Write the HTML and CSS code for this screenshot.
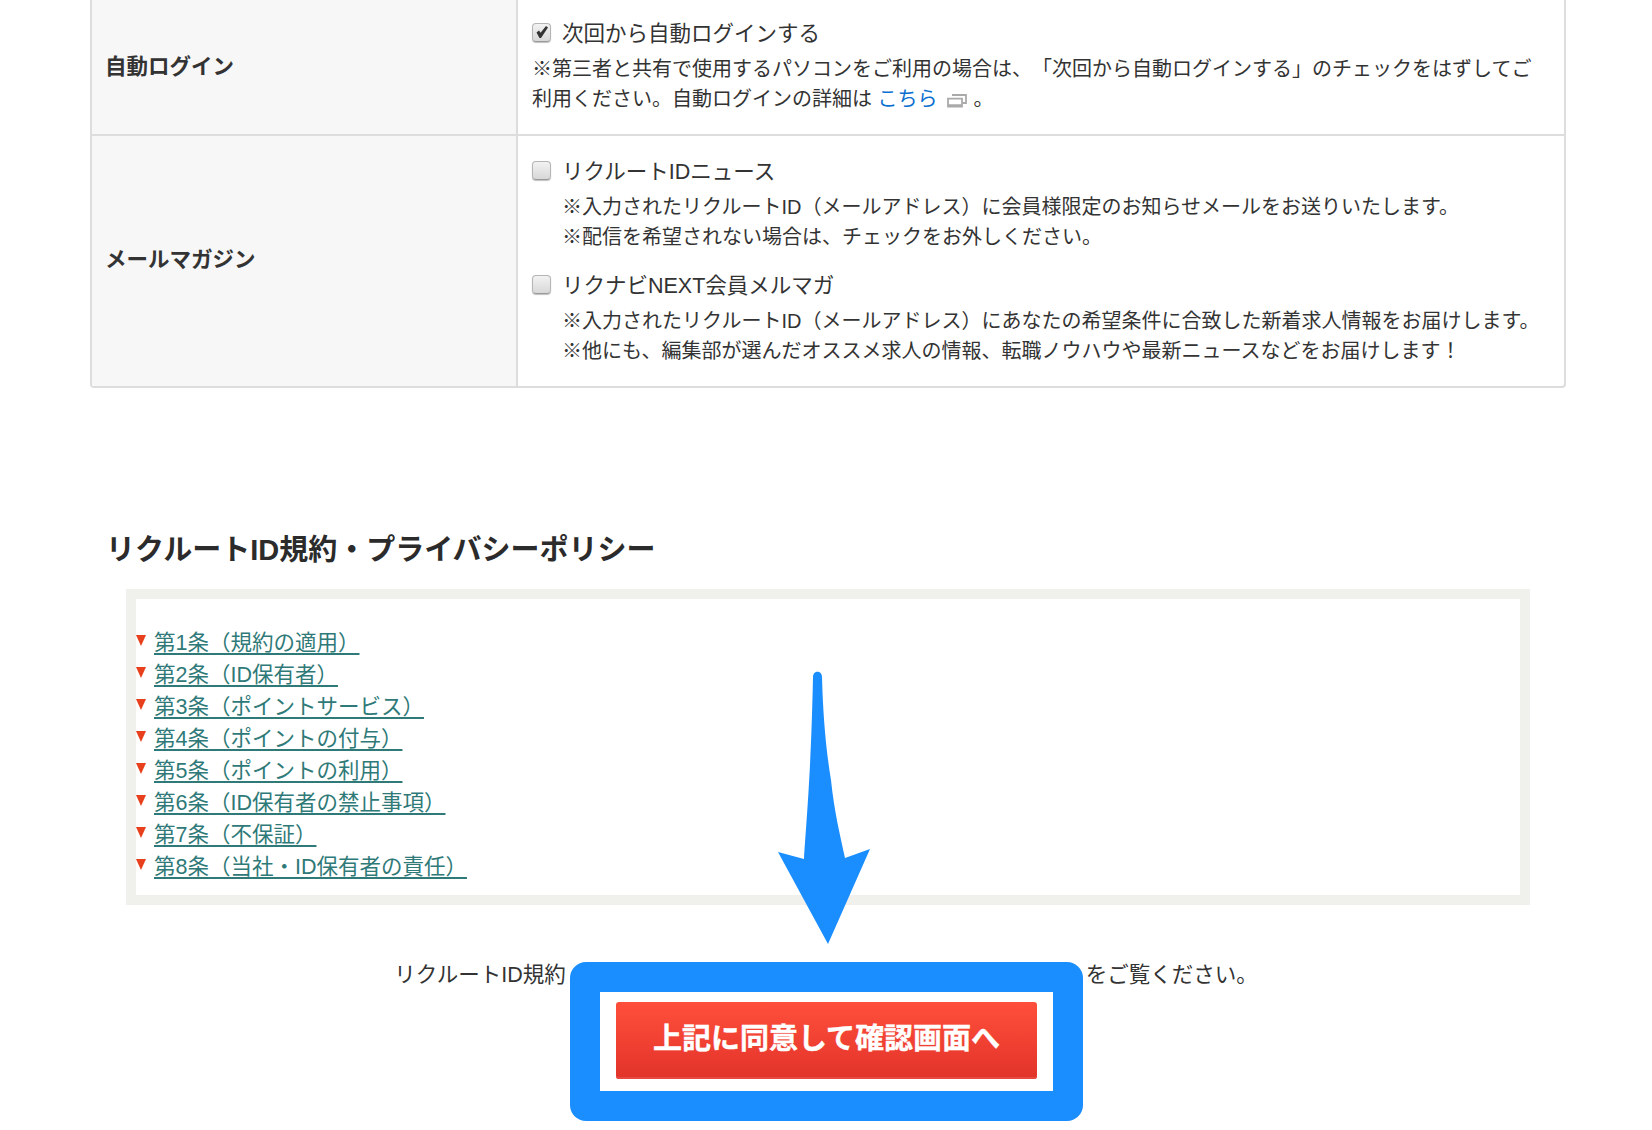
FILE: index.html
```html
<!DOCTYPE html>
<html lang="ja">
<head>
<meta charset="utf-8">
<title>リクルートID</title>
<link rel="stylesheet" href="styles.css">
</head>
<body>
<div class="page">
  <div class="form-table">
    <div class="row row-login">
      <div class="head">自動ログイン</div>
      <div class="cell">
        <div class="option">
          <span class="cb"><svg viewBox="0 0 14 14" width="14" height="14"><path d="M1.500 7.500 L4 5.500 L5.600 7.800 L11 1 L13 2.500 L6 13 L4.500 13 Z" fill="#333"/></svg></span>
          <span>次回から自動ログインする</span>
        </div>
        <p class="note">※第三者と共有で使用するパソコンをご利用の場合は、「次回から自動ログインする」のチェックをはずしてご利用ください。自動ログインの詳細は <a class="info-link" href="#">こちら</a><svg class="win-icon" viewBox="0 0 20 14" width="20" height="14"><path d="M5 1 H19 V9 H16" fill="none" stroke="#aaa" stroke-width="1.800"/><path d="M1 4.700 H15 V12.500 H1 Z" fill="#fff" stroke="#aaa" stroke-width="1.800"/><path d="M1 11.500 H15" stroke="#aaa" stroke-width="2.500"/></svg>。</p>
      </div>
    </div>
    <div class="row row-mail">
      <div class="head">メールマガジン</div>
      <div class="cell">
        <div class="option">
          <span class="cb"></span>
          <span>リクルートIDニュース</span>
        </div>
        <p class="note indent">※入力されたリクルートID（メールアドレス）に会員様限定のお知らせメールをお送りいたします。<br>※配信を希望されない場合は、チェックをお外しください。</p>
        <div class="option option-next">
          <span class="cb"></span>
          <span>リクナビNEXT会員メルマガ</span>
        </div>
        <p class="note indent">※入力されたリクルートID（メールアドレス）にあなたの希望条件に合致した新着求人情報をお届けします。<br>※他にも、編集部が選んだオススメ求人の情報、転職ノウハウや最新ニュースなどをお届けします！</p>
      </div>
    </div>
  </div>

  <h2 class="title">リクルートID規約・プライバシーポリシー</h2>

  <ul class="toc">
    <li><a href="#">第1条（規約の適用）</a></li>
    <li><a href="#">第2条（ID保有者）</a></li>
    <li><a href="#">第3条（ポイントサービス）</a></li>
    <li><a href="#">第4条（ポイントの付与）</a></li>
    <li><a href="#">第5条（ポイントの利用）</a></li>
    <li><a href="#">第6条（ID保有者の禁止事項）</a></li>
    <li><a href="#">第7条（不保証）</a></li>
    <li><a href="#">第8条（当社・ID保有者の責任）</a></li>
  </ul>

  <p class="read-on"><span>リクルートID規約</span><span>をご覧ください。</span></p>

  <div class="highlight">
    <div class="button-well">
      <button class="agree" type="button">上記に同意して確認画面へ</button>
    </div>
  </div>

  <svg class="arrow" viewBox="0 0 110 285" width="110" height="285">
    <path d="M43 12 C43 5 52 5 52 12 C53 50 56 85 61 115 C64 145 70 170 75 193 L100 184 L58 279 L8 187 L34 194 C36 160 41 110 43 12 Z" fill="#1b8eff"/>
  </svg>
</div>
</body>
</html>
```
FILE: styles.css
```css
* { box-sizing: border-box; }
html, body { margin: 0; padding: 0; background: #fff; }
body {
  font-family: "Liberation Sans", "Noto Sans CJK JP", sans-serif;
  color: #333;
  font-size: 20px;
  line-height: 30px;
  text-spacing-trim: space-all;
}
.page { position: relative; width: 1652px; height: 1130px; overflow: hidden; }

.form-table {
  width: 1476px;
  margin-left: 90px;
  border: 2px solid #ddd;
  border-top: 0;
  border-radius: 0 0 4px 4px;
}
.row { display: grid; grid-template-columns: 426px 1fr; }
.row-login { height: 136px; border-bottom: 2px solid #ddd; }
.row-mail { height: 250px; }
.head {
  display: flex;
  align-items: center;
  padding-left: 13px;
  background: #f7f7f7;
  border-right: 2px solid #ddd;
  font-size: 21.500px;
  font-weight: 700;
  color: #333;
}
.row-mail .head { padding-bottom: 2px; }
.cell { padding: 18px 20px 0 14px; }
.row-mail .cell { padding-top: 20px; }
.option { display: flex; align-items: center; gap: 11px; font-size: 21.500px; line-height: 32px; }
.option-next { margin-top: 18px; }
.cb {
  display: flex;
  align-items: center;
  justify-content: center;
  flex: none;
  width: 19px;
  height: 19px;
  margin-top: -4px;
  border: 1px solid #b5b5b5;
  border-bottom-color: #999;
  border-radius: 4px;
  background: linear-gradient(#f2f2f2, #d8d8d8);
  box-shadow: 0 1px 1px rgba(0, 0, 0, .25);
}
.note { margin: 4px 0 0; font-size: 20px; line-height: 30px; }
.indent { padding-left: 30px; }
.info-link { color: #0a6fd0; text-decoration: none; font-size: 20px; }
.win-icon { vertical-align: -2px; margin: 0 7px 0 9px; }

.title {
  margin: 142px 0 0 106px;
  font-size: 29px;
  line-height: 40px;
  font-weight: 700;
  color: #2b2b2b;
}
.toc {
  list-style: none;
  width: 1404px;
  height: 316px;
  margin: 19px 0 0 126px;
  padding: 28px 0 0 18px;
  border: 10px solid #f0f0ec;
  font-size: 21.500px;
  line-height: 32px;
}
.toc li { position: relative; }
.toc li::before {
  content: "";
  position: absolute;
  left: -18px;
  top: 8px;
  width: 0;
  height: 0;
  border-left: 5px solid transparent;
  border-right: 5px solid transparent;
  border-top: 11px solid #e8401c;
}
.toc a {
  color: #2f7a78;
  text-decoration: underline;
  text-decoration-thickness: 2px;
  text-underline-offset: 3px;
}

.read-on {
  display: flex;
  justify-content: center;
  gap: 520px;
  margin: 55px 0 0;
  font-size: 21.500px;
  line-height: 30px;
}

.highlight {
  position: absolute;
  left: 570px;
  top: 962px;
  width: 513px;
  height: 159px;
  padding: 30px;
  background: #1b8eff;
  border-radius: 16px;
}
.button-well { height: 100%; padding: 10px 16px 12px; background: #fff; }
.agree {
  display: block;
  width: 100%;
  height: 100%;
  padding: 0 0 10px;
  border: 0;
  border-radius: 3px;
  background: linear-gradient(#ff4f3b, #e2332a);
  box-shadow: inset 0 -2px 0 #e8493f;
  color: #fff;
  font-family: inherit;
  font-size: 29px;
  font-weight: 700;
  -webkit-text-stroke: .4px #fff;
}
.arrow { position: absolute; left: 770px; top: 665px; }
```
